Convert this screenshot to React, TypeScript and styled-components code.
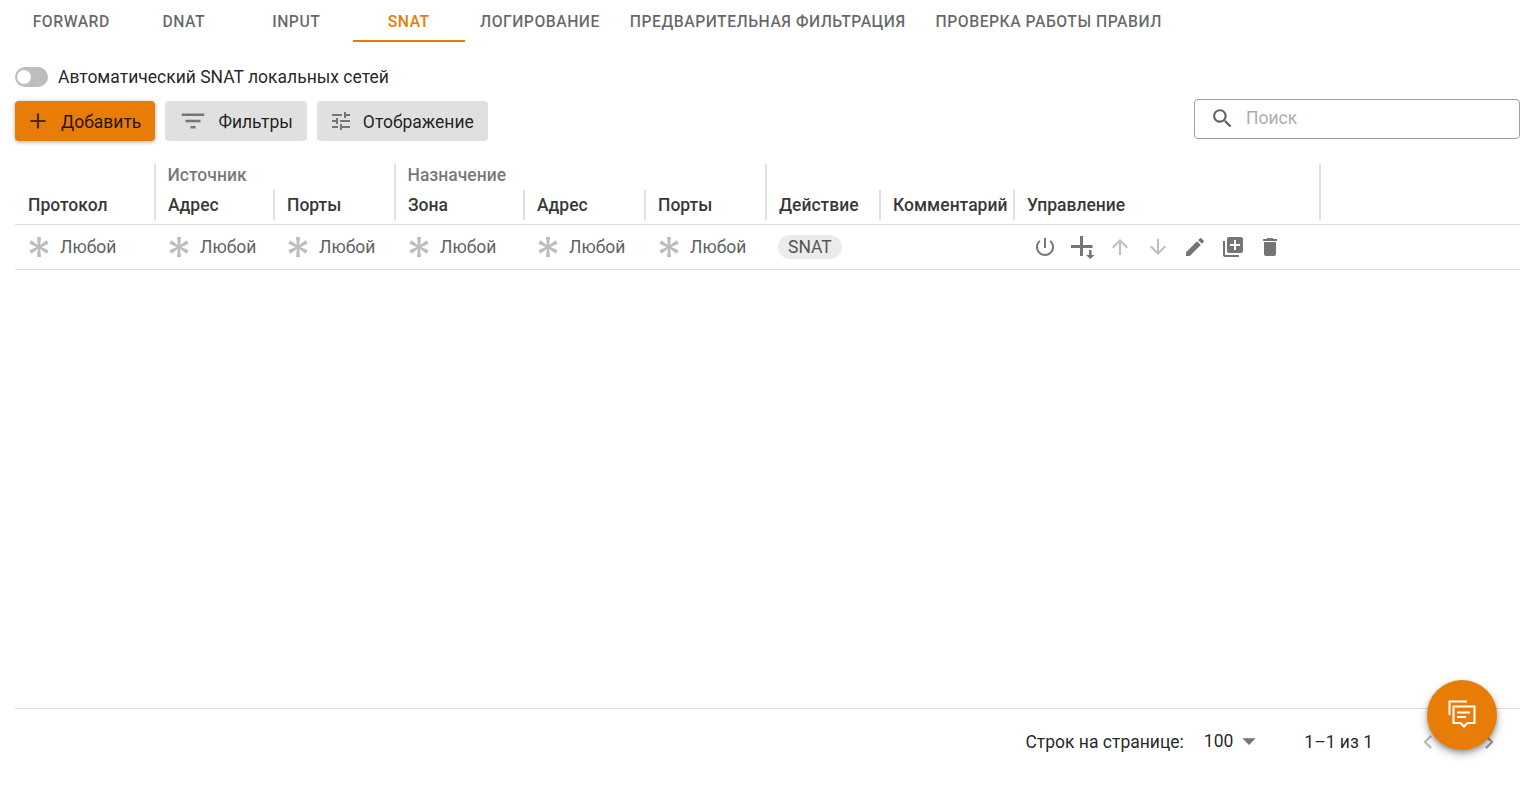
import React from 'react';
import styled, { createGlobalStyle } from 'styled-components';

const GlobalStyle = createGlobalStyle`
    html, body {
        margin: 0;
        padding: 0;
        background: #fff;
        font-family: Roboto, "Liberation Sans", sans-serif;
        color: rgba(0, 0, 0, 0.87);
    }
`;

const COLUMNS = '141px 119px 121px 129px 121px 121px 114px 134px 306px 1fr';
const ORANGE = '#e77d07';

const Page = styled.div`
    box-sizing: border-box;
    width: 1528px;
    height: 791px;
    padding: 0 8px 0 15px;
    display: flex;
    flex-direction: column;
    overflow: hidden;
`;

const Tabs = styled.div`
    display: flex;
    height: 42px;
`;

const Tab = styled.div<{ $active?: boolean }>`
    box-sizing: border-box;
    min-width: 112.5px;
    height: 42px;
    padding: 2px 15px 0;
    display: flex;
    align-items: center;
    justify-content: center;
    font-size: 15.75px;
    font-weight: 500;
    letter-spacing: 0.5px;
    text-transform: uppercase;
    color: ${props => (props.$active ? ORANGE : 'rgba(0, 0, 0, 0.6)')};
    border-bottom: 2px solid ${props => (props.$active ? ORANGE : 'transparent')};
`;

const SwitchRow = styled.div`
    display: flex;
    align-items: center;
    gap: 10px;
    height: 20px;
    margin-top: 25px;
    font-size: 17.5px;
`;

const SwitchTrack = styled.div`
    position: relative;
    width: 33px;
    height: 20px;
    border-radius: 10px;
    background: #bdbdbd;
`;

const SwitchThumb = styled.div`
    position: absolute;
    left: 2px;
    top: 3px;
    width: 14px;
    height: 14px;
    border-radius: 50%;
    background: #fff;
`;

const Toolbar = styled.div`
    display: flex;
    justify-content: space-between;
    align-items: flex-start;
    height: 65px;
    margin-top: 12px;
`;

const ButtonGroup = styled.div`
    display: flex;
    gap: 10px;
    padding-top: 2px;
`;

const Button = styled.div<{ $primary?: boolean; $inset: number }>`
    box-sizing: border-box;
    height: 40px;
    padding: 0 14px 0 ${props => props.$inset}px;
    display: flex;
    align-items: center;
    gap: 10px;
    font-size: 17.5px;
    border-radius: 4px;
    color: rgba(0, 0, 0, 0.87);
    background: ${props => (props.$primary ? ORANGE : '#e0e0e0')};
    box-shadow: ${props => (props.$primary ? '0 1px 4px rgba(0, 0, 0, 0.35)' : 'none')};
`;

const ButtonLabel = styled.span`
    padding-top: 2px;
`;

const SearchBox = styled.div`
    box-sizing: border-box;
    width: 326px;
    height: 40px;
    padding: 0 15px 2px;
    display: flex;
    align-items: center;
    gap: 11px;
    border: 1px solid #a0a0a0;
    border-radius: 4px;
    font-size: 17.5px;
    color: #adadad;
`;

const HeadGrid = styled.div`
    display: grid;
    grid-template-columns: ${COLUMNS};
    grid-template-rows: 26px 30px;
    padding-bottom: 4px;
    border-bottom: 1px solid #e0e0e0;
`;

const HeadCell = styled.div<{ $tall?: boolean }>`
    box-sizing: border-box;
    grid-row: ${props => (props.$tall ? '1 / 3' : '2')};
    padding: 0 0 5px 12px;
    display: flex;
    align-items: flex-end;
    white-space: nowrap;
    font-size: 17.5px;
    font-weight: 500;
    color: rgba(0, 0, 0, 0.8);
    border-right: 2px solid #e0e0e0;

    &:first-child {
        padding-left: 13px;
    }
`;

const GroupCell = styled.div<{ $span: number }>`
    box-sizing: border-box;
    grid-column: span ${props => props.$span};
    grid-row: 1;
    padding: 0 0 0 11.5px;
    font-size: 17.5px;
    font-weight: 500;
    line-height: 22px;
    color: rgba(0, 0, 0, 0.55);
    border-right: 2px solid #e0e0e0;
`;

const BodyRow = styled.div`
    display: grid;
    grid-template-columns: ${COLUMNS};
    height: 44px;
    border-bottom: 1px solid #e0e0e0;
`;

const BodyCell = styled.div`
    padding-left: 10.5px;
    display: flex;
    align-items: center;
    gap: 9.5px;
    font-size: 17.5px;
    color: #616161;

    &:first-child {
        padding-left: 12px;
        gap: 9px;
    }
`;

const Chip = styled.span`
    height: 24px;
    padding: 0 10.5px;
    display: flex;
    align-items: center;
    border-radius: 12px;
    background: #ebebeb;
    font-size: 17.5px;
    color: #555;
`;

const ActionsCell = styled.div`
    padding-left: 11.5px;
    display: flex;
    align-items: center;
`;

const ActionButton = styled.div`
    width: 37.5px;
    display: flex;
    justify-content: center;
`;

const Spacer = styled.div`
    flex: 1;
`;

const Pagination = styled.div`
    box-sizing: border-box;
    height: 83px;
    border-top: 1px solid #e0e0e0;
    padding-bottom: 17px;
    display: flex;
    align-items: center;
    font-size: 17.5px;
`;

const PageInfo = styled.span`
    margin-left: 39px;
`;

const PageSelect = styled.div`
    margin-left: 20px;
    display: flex;
    align-items: center;
    margin-top: -2px;
`;

const PagerArrows = styled.div`
    margin-left: 41px;
    margin-right: 17px;
    width: 89px;
    display: flex;
    justify-content: space-between;
`;

const Fab = styled.div`
    position: fixed;
    left: 1427px;
    top: 680px;
    width: 70px;
    height: 70px;
    border-radius: 50%;
    background: ${ORANGE};
    box-shadow: 0 4px 8px rgba(0, 0, 0, 0.3), 0 2px 4px rgba(0, 0, 0, 0.2);
    display: flex;
    align-items: center;
    justify-content: center;
`;

const Icon: React.FC<{ d: string; size?: number; color: string }> = ({ d, size = 24, color }) => (
    <svg width={size} height={size} viewBox="0 0 24 24" fill={color} style={{ display: 'block', flexShrink: 0 }}>
        <path d={d} />
    </svg>
);

const paths = {
    plus: 'M19 13h-6v6h-2v-6H5v-2h6V5h2v6h6v2z',
    filter: 'M10 18h4v-2h-4v2zM3 6v2h18V6H3zm3 7h12v-2H6v2z',
    tune: 'M3 17v2h6v-2H3zM3 5v2h10V5H3zm10 16v-2h8v-2h-8v-2h-2v6h2zM7 9v2H3v2h4v2h2V9H7zm14 4v-2H11v2h10zm-6-4h2V7h4V5h-4V3h-2v6z',
    search: 'M15.5 14h-.79l-.28-.27C15.41 12.59 16 11.11 16 9.5 16 5.91 13.09 3 9.5 3S3 5.91 3 9.5 5.91 16 9.5 16c1.61 0 3.09-.59 4.23-1.57l.27.28v.79l5 4.99L20.49 19l-4.99-5zm-6 0C7.01 14 5 11.99 5 9.5S7.01 5 9.5 5 14 7.01 14 9.5 11.99 14 9.5 14z',
    asterisk: 'M10,2H14L13.21,9.91L19.66,5.27L21.66,8.73L14.42,12L21.66,15.27L19.66,18.73L13.21,14.09L14,22H10L10.79,14.09L4.34,18.73L2.34,15.27L9.58,12L2.34,8.73L4.34,5.27L10.79,9.91L10,2Z',
    power: 'M13 3h-2v10h2V3zm4.83 2.17l-1.42 1.42C17.99 7.86 19 9.81 19 12c0 3.87-3.13 7-7 7s-7-3.13-7-7c0-2.19 1.01-4.14 2.58-5.42L6.17 5.17C4.23 6.82 3 9.26 3 12c0 4.97 4.03 9 9 9s9-4.03 9-9c0-2.74-1.23-5.18-3.17-6.83z',
    insert: 'M0 10h9V1h3v9h9.5v3H12v8H9v-8H0zM18 15h2.5v5h3l-4.25 4-4.25-4h3z',
    up: 'M4 12l1.41 1.41L11 7.83V20h2V7.83l5.58 5.59L20 12l-8-8-8 8z',
    down: 'M20 12l-1.41-1.41L13 16.17V4h-2v12.17l-5.58-5.59L4 12l8 8 8-8z',
    edit: 'M3 17.25V21h3.75L17.81 9.94l-3.75-3.75L3 17.25zM20.71 7.04c.39-.39.39-1.02 0-1.41l-2.34-2.34a.9959.9959 0 0 0-1.41 0l-1.83 1.83 3.75 3.75 1.83-1.83z',
    copy: 'M4 6H2v14c0 1.1.9 2 2 2h14v-2H4V6zm16-4H8c-1.1 0-2 .9-2 2v12c0 1.1.9 2 2 2h12c1.1 0 2-.9 2-2V4c0-1.1-.9-2-2-2zm-1 9h-4v4h-2v-4H9V9h4V5h2v4h4v2z',
    trash: 'M6 19c0 1.1.9 2 2 2h8c1.1 0 2-.9 2-2V7H6v12zM19 4h-3.5l-1-1h-5l-1 1H5v2h14V4z',
    left: 'M15.41 7.41L14 6l-6 6 6 6 1.41-1.41L10.83 12z',
    right: 'M10 6L8.59 7.41 13.17 12l-4.58 4.59L10 18l6-6z',
    caret: 'M7 10l5 5 5-5z',
};

const tabs = ['Forward', 'DNAT', 'Input', 'SNAT', 'Логирование', 'Предварительная фильтрация', 'Проверка работы правил'];

const actions = [
    { d: paths.power, color: '#757575' },
    { d: paths.insert, color: '#757575' },
    { d: paths.up, color: '#bdbdbd' },
    { d: paths.down, color: '#bdbdbd' },
    { d: paths.edit, color: '#757575' },
    { d: paths.copy, color: '#757575' },
    { d: paths.trash, color: '#757575' },
];

const Any: React.FC = () => (
    <BodyCell>
        <Icon d={paths.asterisk} color="#bdbdbd" />
        Любой
    </BodyCell>
);

export default function App() {
    return (
        <Page>
            <GlobalStyle />
            <Tabs>
                {tabs.map(tab => (
                    <Tab key={tab} $active={tab === 'SNAT'}>{tab}</Tab>
                ))}
            </Tabs>
            <SwitchRow>
                <SwitchTrack><SwitchThumb /></SwitchTrack>
                Автоматический SNAT локальных сетей
            </SwitchRow>
            <Toolbar>
                <ButtonGroup>
                    <Button $primary $inset={10}>
                        <Icon d={paths.plus} size={26} color="#4a2a05" />
                        <ButtonLabel>Добавить</ButtonLabel>
                    </Button>
                    <Button $inset={13}>
                        <Icon d={paths.filter} size={30} color="#757575" />
                        <ButtonLabel>Фильтры</ButtonLabel>
                    </Button>
                    <Button $inset={12}>
                        <Icon d={paths.tune} color="#757575" />
                        <ButtonLabel>Отображение</ButtonLabel>
                    </Button>
                </ButtonGroup>
                <SearchBox>
                    <Icon d={paths.search} size={25} color="#616161" />
                    Поиск
                </SearchBox>
            </Toolbar>
            <HeadGrid>
                <HeadCell $tall>Протокол</HeadCell>
                <GroupCell $span={2}>Источник</GroupCell>
                <GroupCell $span={3}>Назначение</GroupCell>
                <HeadCell>Адрес</HeadCell>
                <HeadCell>Порты</HeadCell>
                <HeadCell>Зона</HeadCell>
                <HeadCell>Адрес</HeadCell>
                <HeadCell>Порты</HeadCell>
                <HeadCell>Действие</HeadCell>
                <HeadCell>Комментарий</HeadCell>
                <HeadCell $tall>Управление</HeadCell>
            </HeadGrid>
            <BodyRow>
                <Any />
                <Any />
                <Any />
                <Any />
                <Any />
                <Any />
                <BodyCell><Chip>SNAT</Chip></BodyCell>
                <div />
                <ActionsCell>
                    {actions.map(action => (
                        <ActionButton key={action.d}>
                            <Icon d={action.d} color={action.color} />
                        </ActionButton>
                    ))}
                </ActionsCell>
            </BodyRow>
            <Spacer />
            <Pagination>
                <Spacer />
                <span>Строк на странице:</span>
                <PageSelect>
                    100
                    <Icon d={paths.caret} size={32} color="#757575" />
                </PageSelect>
                <PageInfo>1–1 из 1</PageInfo>
                <PagerArrows>
                    <Icon d={paths.left} size={28} color="#bdbdbd" />
                    <Icon d={paths.right} size={28} color="#9e9e9e" />
                </PagerArrows>
            </Pagination>
            <Fab>
                <svg width="32" height="32" viewBox="0 0 32 32" fill="none" stroke="#fff" strokeWidth="2">
                    <path d="M21 2.5H3.5V16" />
                    <path d="M7.5 7.5h21V24h-7L18 27.5 14.500 24h-7z" />
                    <path d="M11 13.5h13M11 18h9" />
                </svg>
            </Fab>
        </Page>
    );
}
